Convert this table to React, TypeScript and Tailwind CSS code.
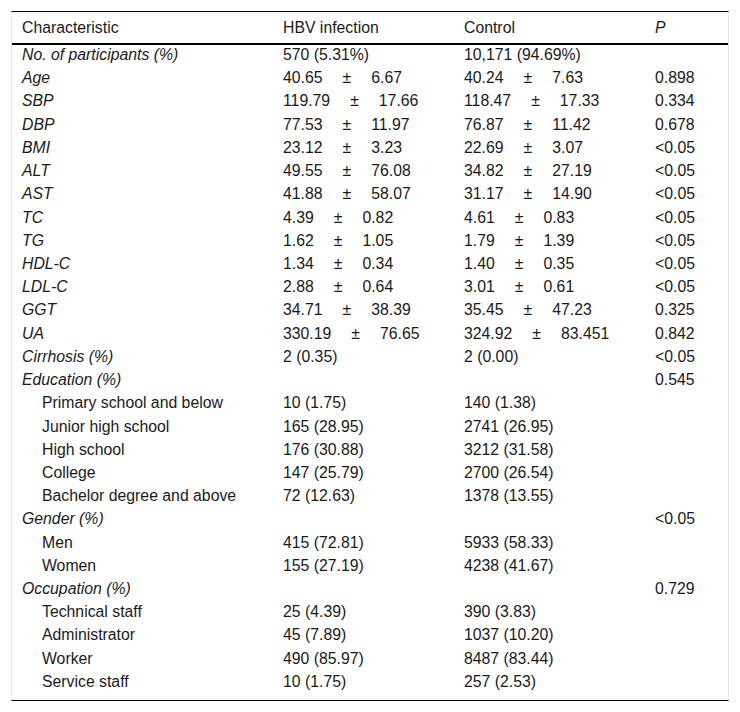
import React from 'react';

type Cell = string | [string, string];

interface Row {
  label: string;
  italic?: boolean;
  indent?: boolean;
  hbv?: Cell;
  control?: Cell;
  p?: string;
}

const rows: Row[] = [
  { label: 'No. of participants (%)', italic: true, hbv: '570 (5.31%)', control: '10,171 (94.69%)' },
  { label: 'Age', italic: true, hbv: ['40.65', '6.67'], control: ['40.24', '7.63'], p: '0.898' },
  { label: 'SBP', italic: true, hbv: ['119.79', '17.66'], control: ['118.47', '17.33'], p: '0.334' },
  { label: 'DBP', italic: true, hbv: ['77.53', '11.97'], control: ['76.87', '11.42'], p: '0.678' },
  { label: 'BMI', italic: true, hbv: ['23.12', '3.23'], control: ['22.69', '3.07'], p: '<0.05' },
  { label: 'ALT', italic: true, hbv: ['49.55', '76.08'], control: ['34.82', '27.19'], p: '<0.05' },
  { label: 'AST', italic: true, hbv: ['41.88', '58.07'], control: ['31.17', '14.90'], p: '<0.05' },
  { label: 'TC', italic: true, hbv: ['4.39', '0.82'], control: ['4.61', '0.83'], p: '<0.05' },
  { label: 'TG', italic: true, hbv: ['1.62', '1.05'], control: ['1.79', '1.39'], p: '<0.05' },
  { label: 'HDL-C', italic: true, hbv: ['1.34', '0.34'], control: ['1.40', '0.35'], p: '<0.05' },
  { label: 'LDL-C', italic: true, hbv: ['2.88', '0.64'], control: ['3.01', '0.61'], p: '<0.05' },
  { label: 'GGT', italic: true, hbv: ['34.71', '38.39'], control: ['35.45', '47.23'], p: '0.325' },
  { label: 'UA', italic: true, hbv: ['330.19', '76.65'], control: ['324.92', '83.451'], p: '0.842' },
  { label: 'Cirrhosis (%)', italic: true, hbv: '2 (0.35)', control: '2 (0.00)', p: '<0.05' },
  { label: 'Education (%)', italic: true, p: '0.545' },
  { label: 'Primary school and below', indent: true, hbv: '10 (1.75)', control: '140 (1.38)' },
  { label: 'Junior high school', indent: true, hbv: '165 (28.95)', control: '2741 (26.95)' },
  { label: 'High school', indent: true, hbv: '176 (30.88)', control: '3212 (31.58)' },
  { label: 'College', indent: true, hbv: '147 (25.79)', control: '2700 (26.54)' },
  { label: 'Bachelor degree and above', indent: true, hbv: '72 (12.63)', control: '1378 (13.55)' },
  { label: 'Gender (%)', italic: true, p: '<0.05' },
  { label: 'Men', indent: true, hbv: '415 (72.81)', control: '5933 (58.33)' },
  { label: 'Women', indent: true, hbv: '155 (27.19)', control: '4238 (41.67)' },
  { label: 'Occupation (%)', italic: true, p: '0.729' },
  { label: 'Technical staff', indent: true, hbv: '25 (4.39)', control: '390 (3.83)' },
  { label: 'Administrator', indent: true, hbv: '45 (7.89)', control: '1037 (10.20)' },
  { label: 'Worker', indent: true, hbv: '490 (85.97)', control: '8487 (83.44)' },
  { label: 'Service staff', indent: true, hbv: '10 (1.75)', control: '257 (2.53)' },
];

const grid = 'grid grid-cols-[261px_181px_191px_1fr]';

const Value: React.FC<{ cell?: Cell }> = ({ cell }) => {
  if (!cell) return <div />;
  if (typeof cell === 'string') return <div className="pl-[10px] whitespace-nowrap">{cell}</div>;
  return (
    <div className="pl-[10px] flex whitespace-nowrap">
      <span>{cell[0]}</span>
      <span className="ml-[20px]">±</span>
      <span className="ml-[20px]">{cell[1]}</span>
    </div>
  );
};

export default function App() {
  return (
    <div className="bg-white min-h-[712px] pt-[11px] px-[11px] font-['Liberation_Sans',Arial,sans-serif] text-[15.8px] text-[#1a1a1a]">
      <div className="border-t border-t-black border-b border-b-black border-x border-x-[#e8e8e8]">
        {/* header */}
        <div className={`${grid} h-[33px] items-center border-b-2 border-black`}>
          <div className="pl-[10px]">Characteristic</div>
          <div className="pl-[10px]">HBV infection</div>
          <div className="pl-[10px]">Control</div>
          <div className="pl-[10px] italic">P</div>
        </div>

        {/* body */}
        <div className="pb-[5px]">
          {rows.map((row) => (
            <div key={row.label} className={`${grid} h-[23.22px] leading-[20px]`}>
              <div className={`${row.indent ? 'pl-[30px]' : 'pl-[10px]'} ${row.italic ? 'italic' : ''} whitespace-nowrap`}>
                {row.label}
              </div>
              <Value cell={row.hbv} />
              <Value cell={row.control} />
              <div className="pl-[10px]">{row.p}</div>
            </div>
          ))}
        </div>
      </div>
    </div>
  );
}
